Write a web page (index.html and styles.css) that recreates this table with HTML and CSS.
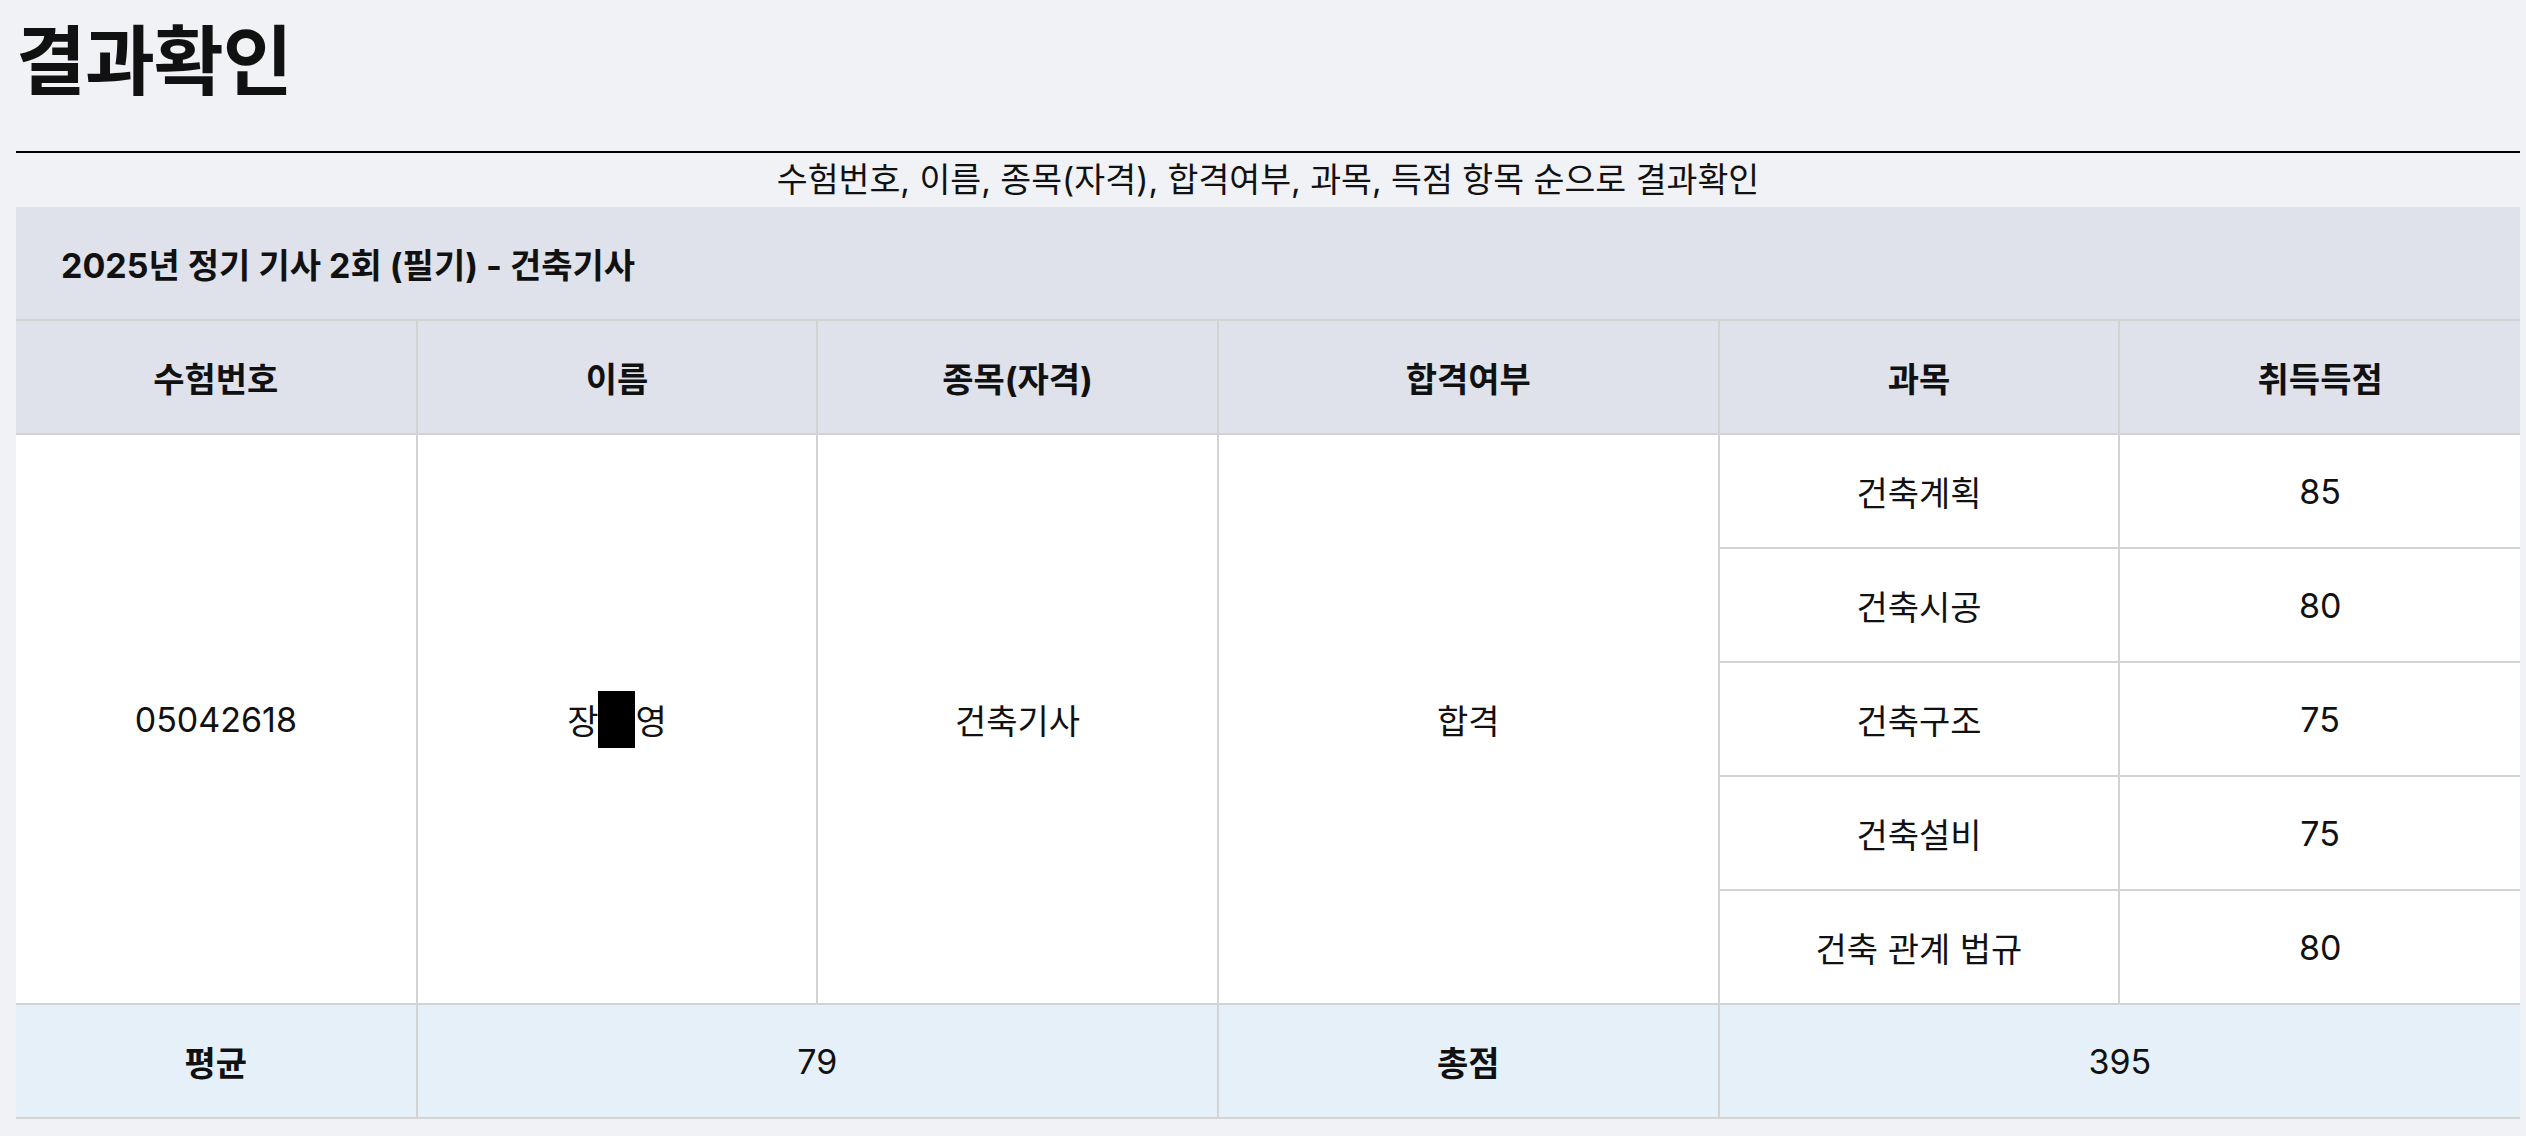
FILE: index.html
```html
<!DOCTYPE html>
<html lang="ko">
<head>
<meta charset="utf-8">
<title>결과확인</title>
<link rel="stylesheet" href="styles.css">
</head>
<body>
<main class="page">
  <h1 class="title">결과확인</h1>
  <hr class="rule">
  <p class="desc">수험번호, 이름, 종목(자격), 합격여부, 과목, 득점 항목 순으로 결과확인</p>
  <table class="result">
    <colgroup>
      <col class="c16"><col class="c16"><col class="c16"><col class="c20"><col class="c16"><col class="c16">
    </colgroup>
    <thead>
      <tr><th colspan="6" class="cap">2025년 정기 기사 2회 (필기) - 건축기사</th></tr>
      <tr class="head">
        <th>수험번호</th><th>이름</th><th>종목(자격)</th><th>합격여부</th><th>과목</th><th>취득득점</th>
      </tr>
    </thead>
    <tbody>
      <tr>
        <td rowspan="5">05042618</td>
        <td rowspan="5">장<span class="redact"></span>영</td>
        <td rowspan="5">건축기사</td>
        <td rowspan="5">합격</td>
        <td>건축계획</td><td>85</td>
      </tr>
      <tr><td>건축시공</td><td>80</td></tr>
      <tr><td>건축구조</td><td>75</td></tr>
      <tr><td>건축설비</td><td>75</td></tr>
      <tr><td>건축 관계 법규</td><td>80</td></tr>
    </tbody>
    <tfoot>
      <tr>
        <th>평균</th><td colspan="2">79</td><th>총점</th><td colspan="2">395</td>
      </tr>
    </tfoot>
  </table>
</main>
</body>
</html>
```

FILE: styles.css
```css
html, body {
  margin: 0;
  padding: 0;
  background: #f1f2f6;
}
body {
  font-family: "Inter", "Noto Sans CJK KR", sans-serif;
  color: #111;
}
.page {
  padding: 17px 6px 12px 16px;
}
.title {
  margin: 0 0 46px;
  font-size: 76px;
  line-height: 88px;
  font-weight: 700;
  color: #111;
  letter-spacing: -1px;
}
.rule {
  margin: 0;
  border: 0;
  height: 2px;
  background: #000;
}
.desc {
  margin: 0;
  text-align: center;
  font-size: 33.6px;
  line-height: 54px;
}
.result {
  width: 100%;
  border-collapse: collapse;
  table-layout: fixed;
  font-size: 34px;
}
.c16 { width: 16%; }
.c20 { width: 20%; }
.result th,
.result td {
  height: 112px;
  padding: 0;
  text-align: center;
  vertical-align: middle;
  border: 2px solid #d3d3d3;
  background: #fff;
}
.result tr > :first-child { border-left: 0; }
.result tr > :last-child { border-right: 0; }
.result th { font-weight: 700; }
.result thead th { background: #dfe2eb; border-top: 0; }
.result .cap {
  text-align: left;
  padding-left: 45px;
  border-left: 2px solid #d3d3d3;
}
.result tfoot th,
.result tfoot td {
  background: #e6f0f9;
}
.redact {
  display: inline-block;
  width: 37px;
  height: 57px;
  background: #000;
  vertical-align: -14px;
}
```
